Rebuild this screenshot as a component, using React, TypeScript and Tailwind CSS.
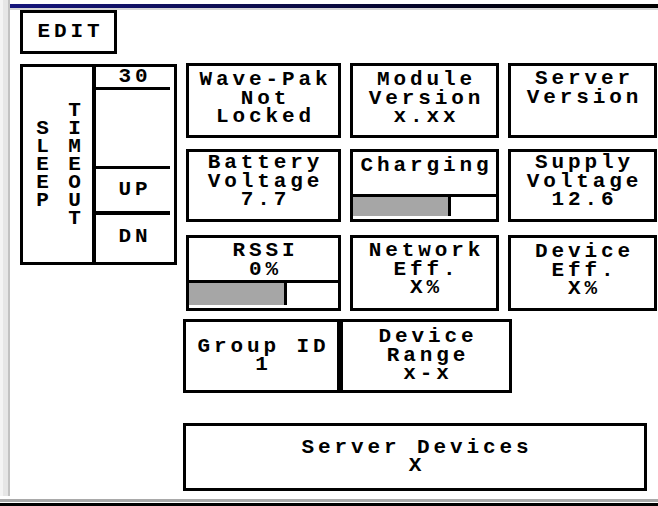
import React from "react";

const font =
  "font-['Liberation_Mono','DejaVu_Sans_Mono',monospace] font-bold text-[21px] leading-[18.5px] text-black";
const spaced = "tracking-[3.9px] pl-[3.9px]";

function Lines({ lines }: { lines: string[] }) {
  return (
    <div className={`${font} flex flex-col items-center`}>
      {lines.map((l, i) => (
        <div key={i} className={`${spaced} whitespace-pre text-center`}>
          {l}
        </div>
      ))}
    </div>
  );
}

function Cell({
  lines,
  className = "",
}: {
  lines: string[];
  className?: string;
}) {
  return (
    <div className={`flex flex-col items-center border-[3px] border-black ${className}`}>
      <Lines lines={lines} />
    </div>
  );
}

function BarCell({
  lines,
  fill,
  top,
  bar,
  pad,
  className = "",
}: {
  lines: string[];
  fill: number;
  top: string;
  bar: string;
  pad: string;
  className?: string;
}) {
  return (
    <div className={`flex flex-col border-[3px] border-black ${className}`}>
      <div className={`${top} ${pad} flex flex-col items-center`}>
        <Lines lines={lines} />
      </div>
      <div className={`${bar} flex border-t-[3px] border-black`}>
        <div className="bg-[#a6a6a6]" style={{ width: fill }} />
        <div className="flex-1 border-l-[3px] border-black bg-white" />
      </div>
    </div>
  );
}

function Stack({ word }: { word: string }) {
  return (
    <div className={`${font} flex w-[13px] flex-col items-center !leading-[18px]`}>
      {word.split("").map((c, i) => (
        <span key={i} className="block h-[18px]">
          {c}
        </span>
      ))}
    </div>
  );
}

export default function App() {
  return (
    <div className="flex h-[506px] w-[658px] flex-col overflow-hidden bg-white">
      <div className="flex min-h-0 flex-1">
        {/* window edge */}
        <div className="flex w-[10px] flex-none">
          <div className="w-[3px] bg-[#f4f4f4]" />
          <div className="w-[5px] bg-[#e6e6e6]" />
          <div className="w-[2px] bg-[#c2c2c2]" />
        </div>

        <div className="flex min-w-0 flex-1 flex-col">
          <div className="h-[4px] flex-none bg-white" />
          <div className="h-[4px] flex-none bg-linear-to-r from-[#16167c] via-[#0a0a40] to-black" />
          <div className="h-[2px] flex-none bg-[#d6d6d6]" />

          {/* EDIT */}
          <div className="ml-[10px] flex h-[44px] w-[97px] items-center justify-center border-[3px] border-black">
            <span className={`${font} ${spaced}`}>EDIT</span>
          </div>

          <div className="mt-[9px] flex items-start">
            {/* sleep timeout */}
            <div className="ml-[10px] mt-[1px] flex h-[201px] w-[157px] border-[3px] border-black">
              <div className="flex w-[69px] items-center justify-center gap-[19px] pl-[2px]">
                <Stack word="SLEEP" />
                <Stack word="TIMEOUT" />
              </div>
              <div className="flex w-[78px] flex-col border-l-[4px] border-black">
                <div className="flex h-[20px] items-center justify-center">
                  <span className={`${font} ${spaced}`}>30</span>
                </div>
                <div className="h-[79px] border-t-[3px] border-black" />
                <div className="flex h-[45px] items-center justify-center border-t-[3px] border-black">
                  <span className={`${font} ${spaced}`}>UP</span>
                </div>
                <div className="flex h-[48px] items-center justify-center border-t-[4px] border-black">
                  <span className={`${font} ${spaced}`}>DN</span>
                </div>
              </div>
            </div>

            {/* status grid */}
            <div className="ml-[9px] flex flex-col">
              <div className="grid grid-cols-[155px_149px_149px] gap-x-[9px]">
                <Cell className="h-[75px] pt-[5px]" lines={["Wave-Pak", "Not", "Locked"]} />
                <Cell className="h-[75px] pt-[5px]" lines={["Module", "Version", "x.xx"]} />
                <Cell className="h-[75px] pt-[4px]" lines={["Server", "Version"]} />
              </div>

              <div className="mt-[11px] grid grid-cols-[155px_149px_149px] gap-x-[9px]">
                <Cell className="h-[73px] pt-[2px]" lines={["Battery", "Voltage", "7.7"]} />
                <BarCell
                  className="h-[73px]"
                  top="h-[42px]"
                  bar="h-[22px]"
                  pad="pt-[5px]"
                  fill={95}
                  lines={["Charging"]}
                />
                <Cell className="h-[73px] pt-[2px]" lines={["Supply", "Voltage", "12.6"]} />
              </div>

              <div className="mt-[13px] grid grid-cols-[155px_149px_149px] gap-x-[9px]">
                <BarCell
                  className="h-[76px]"
                  top="h-[42px]"
                  bar="h-[25px]"
                  pad="pt-[4px]"
                  fill={95}
                  lines={["RSSI", "0%"]}
                />
                <Cell className="h-[76px] pt-[4px]" lines={["Network", "Eff.", "X%"]} />
                <Cell className="h-[76px] pt-[5px]" lines={["Device", "Eff.", "X%"]} />
              </div>

              <div className="ml-[-3px] mt-[8px] flex">
                <Cell className="h-[74px] w-[157px] justify-center" lines={["Group ID", "1"]} />
                <Cell className="h-[74px] w-[172px] justify-center" lines={["Device", "Range", "x-x"]} />
              </div>

              <Cell
                className="ml-[-3px] mt-[30px] h-[68px] w-[464px] justify-center"
                lines={["Server Devices", "X"]}
              />
            </div>
          </div>
        </div>
      </div>

      {/* bottom edge */}
      <div className="h-[3px] flex-none bg-white" />
      <div className="h-[3px] flex-none bg-[#a9a9a9]" />
      <div className="h-px flex-none bg-white" />
      <div className="h-[3px] flex-none bg-black" />
    </div>
  );
}
